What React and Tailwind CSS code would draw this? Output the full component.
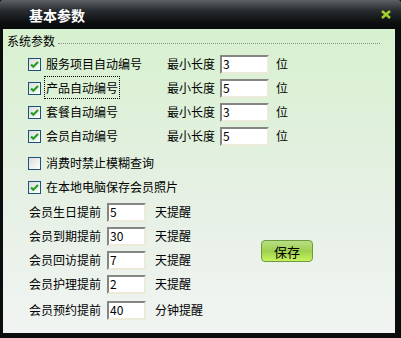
import React from "react";

const font = { fontFamily: '"Noto Sans CJK SC", "Noto Sans", sans-serif' };

function Check({ checked }) {
  return (
    <span className="flex h-[13px] w-[13px] shrink-0 items-center justify-center border border-[#1c5180] bg-[linear-gradient(135deg,#dcdcd6,#ffffff)]">
      {checked && (
        <svg width="11" height="11" viewBox="0 0 11 11">
          <path d="M2 5.5 L4.3 7.8 L9 3" fill="none" stroke="#21a121" strokeWidth="2.2" />
        </svg>
      )}
    </span>
  );
}

function Field({ value, w }) {
  return (
    <div
      className={`flex h-[19px] ${w} items-center border-2 border-t-[#858585] border-l-[#858585] border-r-[#ecead8] border-b-[#ecead8] bg-white pl-[1px] text-[12px] leading-none text-black`}
    >
      {value}
    </div>
  );
}

function CheckRow({ label, value, focus, className = "" }) {
  return (
    <div className={`flex h-[24px] items-center ${className}`}>
      <div className="ml-[25px]">
        <Check checked />
      </div>
      <div className="w-[126px] pl-[4px]">
        <span className={`px-[1px] py-[2px] ${focus ? "outline outline-1 outline-dotted outline-black" : ""}`}>{label}</span>
      </div>
      <span className="w-[53px]">最小长度</span>
      <Field value={value} w="w-[49px]" />
      <span className="ml-[7px]">位</span>
    </div>
  );
}

function NumRow({ label, value, suffix, className = "" }) {
  return (
    <div className={`flex h-[24px] items-center ${className}`}>
      <span className="ml-[26px] w-[78px]">{label}</span>
      <Field value={value} w="w-[39px]" />
      <span className="ml-[9px]">{suffix}</span>
    </div>
  );
}

export default function App() {
  return (
    <div className="flex h-[338px] w-[401px] flex-col bg-[#0b0c0d] text-[12px] text-black" style={font}>
      <div className="flex h-[29px] shrink-0 items-center justify-between rounded-t-[3px] bg-[linear-gradient(to_bottom,#5e6266,#2a2e32_35%,#0e1012_75%,#08090a)] pl-[29px] pr-[10px]">
        <span className="text-[14px] font-bold leading-none text-white">基本参数</span>
        <svg width="10" height="9" viewBox="0 0 10 9">
          <path d="M1 1 L9 8 M9 1 L1 8" stroke="#a4d12a" strokeWidth="2.4" />
        </svg>
      </div>
      <div className="mb-[5px] ml-[3px] mr-[6px] flex flex-1 flex-col bg-[linear-gradient(to_bottom,#d7f1cf,#e6f0e4_55%,#f0f4f2)]">
        <div className="flex h-[23px] items-center pl-[4px]">
          <span className="leading-none">系统参数</span>
          <div className="ml-[3px] mr-[15px] mt-[5px] flex-1 border-b border-dotted border-[#8a8f8a]" />
        </div>
        <CheckRow label="服务项目自动编号" value="3" />
        <CheckRow label="产品自动编号" value="5" focus />
        <CheckRow label="套餐自动编号" value="3" />
        <CheckRow label="会员自动编号" value="5" />
        <div className="mt-[3px] flex h-[24px] items-center">
          <div className="ml-[25px]">
            <Check checked={false} />
          </div>
          <span className="pl-[5px]">消费时禁止模糊查询</span>
        </div>
        <div className="flex h-[24px] items-center">
          <div className="ml-[25px]">
            <Check checked />
          </div>
          <span className="pl-[5px]">在本地电脑保存会员照片</span>
        </div>
        <div className="flex">
          <div className="flex w-[258px] flex-col">
            <NumRow label="会员生日提前" value="5" suffix="天提醒" className="mt-[1px]" />
            <NumRow label="会员到期提前" value="30" suffix="天提醒" />
            <NumRow label="会员回访提前" value="7" suffix="天提醒" />
            <NumRow label="会员护理提前" value="2" suffix="天提醒" />
            <NumRow label="会员预约提前" value="40" suffix="分钟提醒" className="mt-[2px]" />
          </div>
          <div className="mt-[41px]">
            <button className="flex h-[22px] w-[52px] items-center justify-center rounded-[4px] border border-[#6f9a40] bg-[linear-gradient(to_bottom,#b8de84,#9fd050_50%,#c8f25c)] text-[13px] leading-none text-black">
              保存
            </button>
          </div>
        </div>
      </div>
    </div>
  );
}
